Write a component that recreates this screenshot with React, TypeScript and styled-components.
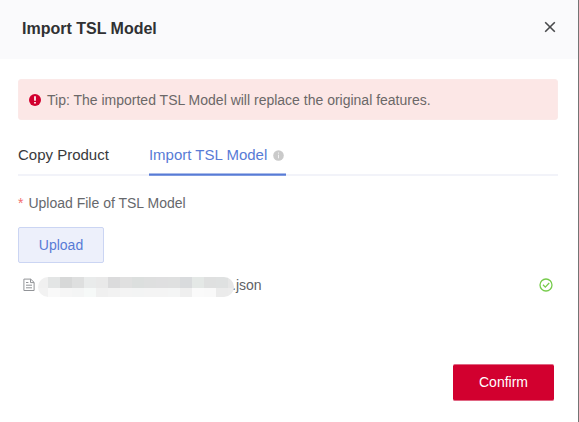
import React from "react";
import styled, { createGlobalStyle } from "styled-components";

const GlobalStyle = createGlobalStyle`
  * { box-sizing: border-box; }
  body {
    margin: 0;
    background: #fff;
    font-family: "Liberation Sans", Arial, sans-serif;
    font-size: 14px;
    overflow: hidden;
  }
`;

const Dialog = styled.section`
  width: 579px;
  height: 422px;
  display: flex;
  flex-direction: column;
  background: #fff;
  border-right: 1px solid #747474;
`;

const Header = styled.header`
  height: 59px;
  flex: none;
  display: flex;
  align-items: center;
  justify-content: space-between;
  padding: 0 22px 1px;
  background: #fafafc;
`;

const Title = styled.h1`
  margin: 0;
  font-size: 16px;
  line-height: 20px;
  color: #303133;
`;

const CloseButton = styled.button`
  display: flex;
  padding: 0;
  margin-top: -4px;
  border: 0;
  background: none;
`;

const Body = styled.main`
  flex: 1;
  display: flex;
  flex-direction: column;
  padding: 20px 20px 21px 18px;
`;

const Alert = styled.div`
  height: 41px;
  display: flex;
  align-items: center;
  gap: 6px;
  padding: 1px 10px 0;
  border: 1px solid #fbe9e8;
  border-radius: 3px;
  background: #fce7e6;
  color: #6b6868;
`;

const Label = styled.span<{ $size?: number }>`
  font-size: ${(p) => p.$size ?? 14}px;
  line-height: 18px;
  white-space: nowrap;
`;

const Tabs = styled.nav`
  height: 36px;
  margin-top: 20px;
  display: flex;
  gap: 40px;
  padding-top: 6px;
  box-shadow: inset 0 -2px 0 #f2f3f9;
`;

const Tab = styled.div<{ $active?: boolean }>`
  display: flex;
  align-items: flex-start;
  gap: 6px;
  height: 30px;
  color: ${(p) => (p.$active ? "#587bd6" : "#38393b")};
  box-shadow: ${(p) => (p.$active ? "inset 0 -1px 0 #7f9be0, inset 0 -2px 0 #587bd6, inset 0 -3px 0 #a9bbea" : "none")};
  svg { margin-top: 4px; }
`;

const FieldLabel = styled.div`
  display: flex;
  gap: 5px;
  height: 18px;
  margin-top: 18px;
  color: #66686c;
`;

const Required = styled.span`
  color: #f26e6e;
  line-height: 18px;
`;

const UploadButton = styled.button`
  width: 86px;
  height: 36px;
  margin-top: 15px;
  padding: 0;
  border: 1px solid #cbd5f3;
  border-radius: 2px;
  background: #edf0fb;
  color: #587bd6;
  font-family: inherit;
`;

const FileRow = styled.div`
  display: flex;
  align-items: center;
  height: 22px;
  margin-top: 11px;
  padding: 0 5px;
  color: #606266;
`;

const MaskedName = styled.span`
  display: grid;
  grid-template-columns: 10px repeat(15, 12px) 6px;
  grid-template-rows: 11px 9px;
  width: 196px;
  height: 20px;
  margin: 4px -2px 0 3px;
  border-radius: 10px;
  overflow: hidden;
  z-index: 1;
`;

const Cell = styled.i<{ $tone: string }>`
  background: ${(p) => p.$tone};
`;

const Status = styled.span`
  display: flex;
  margin-left: auto;
`;

const Footer = styled.footer`
  display: flex;
  justify-content: flex-end;
  margin-top: auto;
  padding-right: 4px;
`;

const ConfirmButton = styled.button`
  width: 101px;
  height: 37px;
  padding: 0 0 2px;
  border: 0;
  border-top: 1px solid #e06683;
  border-bottom: 1px solid #e06683;
  border-radius: 2px;
  background: #d2002f;
  color: #fff;
  font-family: inherit;
`;

const upperTones = [
  "#f0f0f0", "#e3e5e5", "#d7d8d8", "#dedfdf", "#e9ebeb", "#e9e9e9", "#dbdbdc", "#e0e0e0",
  "#dcdfde", "#dedfdf", "#dfdfe0", "#dfe0e0", "#d9dbdd", "#e4e8e6", "#dfe0e0", "#dfe1e1", "#e6e6e6",
];
const lowerTones = [
  "#f2f2f2", "#f9f9f9", "#f6f6f6", "#f4f5f5", "#f6f9f8", "#f0f0f0", "#f2f2f2", "#f4f4f4", "#f3f4f4",
  "#f4f4f4", "#f4f4f4", "#f4f5f5", "#efefef", "#fafafa", "#f9f9f9", "#ebebeb", "#ececec",
];

export default function App() {
  return (
    <>
      <GlobalStyle />
      <Dialog>
        <Header>
          <Title>Import TSL Model</Title>
          <CloseButton aria-label="Close">
            <svg width="12" height="12" viewBox="0 0 12 12" fill="none" stroke="#48494b" strokeWidth="1.6">
              <path d="M1.2 1.2 10.8 10.8M10.8 1.2 1.2 10.8" />
            </svg>
          </CloseButton>
        </Header>
        <Body>
          <Alert>
            <svg width="12" height="12" viewBox="0 0 12 12">
              <circle cx="6" cy="6" r="6" fill="#d2002f" />
              <path d="M6 2.3v4.5M6 8v1.6" stroke="#fff" strokeWidth="1.7" />
            </svg>
            <Label>Tip: The imported TSL Model will replace the original features.</Label>
          </Alert>
          <Tabs>
            <Tab><Label $size={15}>Copy Product</Label></Tab>
            <Tab $active>
              <Label $size={15}>Import TSL Model</Label>
              <svg width="13" height="11" viewBox="0 0 13 11">
                <circle cx="5.5" cy="5.5" r="5.3" fill="#cacaca" />
                <path d="M5.5 2.5v1.2M5.5 4.7v3.6" stroke="#f2f2f2" strokeWidth="1" />
              </svg>
            </Tab>
          </Tabs>
          <FieldLabel>
            <Required>*</Required>
            <Label>Upload File of TSL Model</Label>
          </FieldLabel>
          <UploadButton><Label>Upload</Label></UploadButton>
          <FileRow>
            <svg width="12" height="14" viewBox="0 0 12 14" fill="none" stroke="#929498">
              <path d="M.9 1.1h6.8l3.4 3.3v8.1H.9zM7.5 1.1v3.5h3.6M3 4.5h2.4M3 7.2h6M3 9.8h6" />
            </svg>
            <MaskedName>
              {[...upperTones, ...lowerTones].map((tone, i) => <Cell key={i} $tone={tone} />)}
            </MaskedName>
            <Label>.json</Label>
            <Status>
              <svg width="14" height="14" viewBox="0 0 14 14" fill="none" stroke="#76cb4b" strokeWidth="1.3">
                <circle cx="7" cy="7" r="6" />
                <path d="m4 6.8 2.3 2.3L10.2 5" />
              </svg>
            </Status>
          </FileRow>
          <Footer>
            <ConfirmButton><Label>Confirm</Label></ConfirmButton>
          </Footer>
        </Body>
      </Dialog>
    </>
  );
}
